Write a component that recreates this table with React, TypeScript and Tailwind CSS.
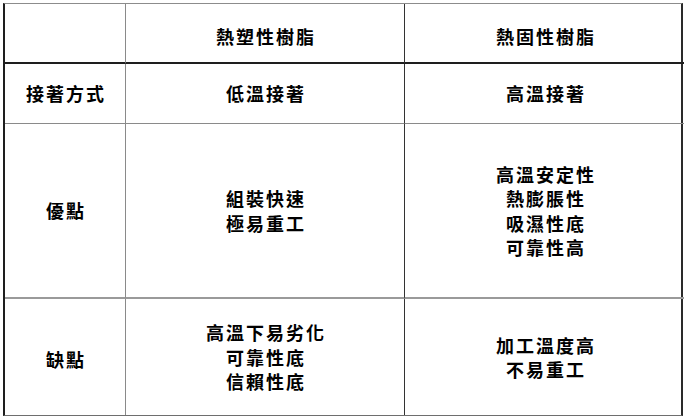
import React from "react";

const font = {
  fontFamily: '"Noto Sans CJK TC", "Noto Sans CJK SC", sans-serif',
};

function Cell({
  lines,
  className,
}: {
  lines: string[];
  className: string;
}) {
  return (
    <div className={`flex flex-col items-center justify-center text-[18px] leading-[24.5px] tracking-[2px] text-black font-semibold ${className}`}>
      {lines.map((l, i) => (
        <div key={i} className="pl-[2px]">{l}</div>
      ))}
    </div>
  );
}

export default function App() {
  return (
    <div className="w-[684px] h-[418px] bg-white" style={font}>
      <div className="ml-[3px] mt-[3px] w-[680px] grid grid-cols-[121px_279px_280px] grid-rows-[60px_60px_175px_116px] border-t border-t-[#8c8c8c] border-l-2 border-l-[#1e1e1e] border-r-2 border-r-[#2a2a2a] border-b border-b-[#6e6e6e]">
        <Cell lines={[]} className="border-r border-r-[#8a8a8a] border-b-2 border-b-[#1e1e1e]" />
        <Cell lines={["熱塑性樹脂"]} className="pt-[6px] border-r border-r-[#333] border-b-2 border-b-[#1e1e1e]" />
        <Cell lines={["熱固性樹脂"]} className="pt-[6px] border-b-2 border-b-[#1e1e1e]" />

        <Cell lines={["接著方式"]} className="border-r border-r-[#8a8a8a] border-b border-b-[#8a8a8a]" />
        <Cell lines={["低溫接著"]} className="border-r border-r-[#333] border-b border-b-[#8a8a8a]" />
        <Cell lines={["高溫接著"]} className="border-b border-b-[#8a8a8a]" />

        <Cell lines={["優點"]} className="border-r border-r-[#8a8a8a] border-b-2 border-b-[#9a9a9a]" />
        <Cell lines={["組裝快速", "極易重工"]} className="border-r border-r-[#333] border-b-2 border-b-[#9a9a9a]" />
        <Cell lines={["高溫安定性", "熱膨脹性", "吸濕性底", "可靠性高"]} className="border-b-2 border-b-[#9a9a9a]" />

        <Cell lines={["缺點"]} className="pt-[4px] border-r border-r-[#8a8a8a]" />
        <Cell lines={["高溫下易劣化", "可靠性底", "信賴性底"]} className="border-r border-r-[#333]" />
        <Cell lines={["加工溫度高", "不易重工"]} className="" />
      </div>
    </div>
  );
}
